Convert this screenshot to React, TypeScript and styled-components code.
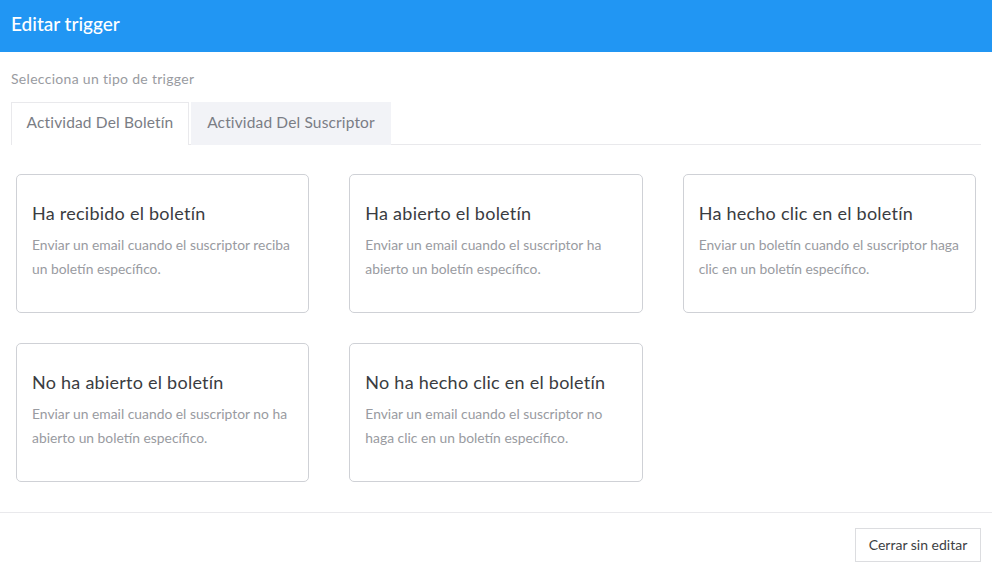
import React from "react";
import styled, { createGlobalStyle } from "styled-components";

const FONT = `Lato, "Noto Sans", "Liberation Sans", sans-serif`;

const triggers = [
  {
    title: "Ha recibido el boletín",
    text: "Enviar un email cuando el suscriptor reciba un boletín específico.",
  },
  {
    title: "Ha abierto el boletín",
    text: "Enviar un email cuando el suscriptor ha abierto un boletín específico.",
  },
  {
    title: "Ha hecho clic en el boletín",
    text: "Enviar un boletín cuando el suscriptor haga clic en un boletín específico.",
  },
  {
    title: "No ha abierto el boletín",
    text: "Enviar un email cuando el suscriptor no ha abierto un boletín específico.",
  },
  {
    title: "No ha hecho clic en el boletín",
    text: "Enviar un email cuando el suscriptor no haga clic en un boletín específico.",
  },
];

const GlobalStyle = createGlobalStyle`
  html, body {
    margin: 0;
    padding: 0;
    background: #fff;
  }
  body {
    font-family: ${FONT};
  }
`;

const Page = styled.div`
  width: 992px;
  height: 575px;
  display: flex;
  flex-direction: column;
  overflow: hidden;
`;

/* ------------------------ HEADER ---------------------- */

const Header = styled.header`
  height: 52px;
  flex-shrink: 0;
  display: flex;
  align-items: center;
  padding: 0 11px 5px;
  box-sizing: border-box;
  background: #2196f3;
`;

const Title = styled.h1`
  margin: 0;
  color: #fff;
  font-size: 19px;
  font-weight: 500;
`;

/* ------------------------ BODY ---------------------- */

const Body = styled.main`
  flex: 1;
  padding: 0 11px;
`;

const Label = styled.div`
  margin-top: 18px;
  height: 17px;
  line-height: 17px;
  color: #999ba1;
  font-size: 14px;
  letter-spacing: 0.3px;
`;

const Tabs = styled.div`
  margin-top: 15px;
  height: 42px;
  display: flex;
  gap: 2px;
  border-bottom: 1px solid #e9e9ec;
`;

const Tab = styled.div<{ $active?: boolean }>`
  height: 43px;
  box-sizing: border-box;
  display: flex;
  align-items: center;
  justify-content: center;
  padding-bottom: 4px;
  width: ${(props) => (props.$active ? "178px" : "200px")};
  color: #7a7d85;
  font-size: 15.5px;
  letter-spacing: 0.15px;
  background: ${(props) => (props.$active ? "#fff" : "#f2f3f7")};
  border: ${(props) => (props.$active ? "1px solid #e9e9ec" : "none")};
  border-bottom: none;
`;

const Grid = styled.div`
  margin: 29px 5px 0;
  display: grid;
  grid-template-columns: repeat(3, 1fr);
  column-gap: 40px;
  row-gap: 30px;
`;

const Card = styled.div`
  height: 139px;
  box-sizing: border-box;
  padding: 28px 15px 0;
  border: 1px solid #cfd1d6;
  border-radius: 5px;
`;

const CardTitle = styled.h3`
  margin: 0;
  height: 20px;
  line-height: 20px;
  color: #3a3c41;
  font-size: 18px;
  font-weight: 400;
  letter-spacing: 0.25px;
`;

const CardText = styled.p`
  margin: 10px 0 0;
  color: #999ba1;
  font-size: 13.85px;
  line-height: 24px;
`;

/* ------------------------ FOOTER ---------------------- */

const Footer = styled.footer`
  height: 63px;
  flex-shrink: 0;
  box-sizing: border-box;
  display: flex;
  justify-content: flex-end;
  padding: 15px 11px 0;
  border-top: 1px solid #e9e9ec;
`;

const CloseButton = styled.button`
  width: 126px;
  height: 34px;
  padding: 0 0 2px;
  background: #fff;
  border: 1px solid #dcdde0;
  color: #3d3f44;
  font-family: ${FONT};
  font-size: 14px;
`;

export default function App() {
  return (
    <Page>
      <GlobalStyle />
      <Header>
        <Title>Editar trigger</Title>
      </Header>
      <Body>
        <Label>Selecciona un tipo de trigger</Label>
        <Tabs>
          <Tab $active>Actividad Del Boletín</Tab>
          <Tab>Actividad Del Suscriptor</Tab>
        </Tabs>
        <Grid>
          {triggers.map((item) => (
            <Card key={item.title}>
              <CardTitle>{item.title}</CardTitle>
              <CardText>{item.text}</CardText>
            </Card>
          ))}
        </Grid>
      </Body>
      <Footer>
        <CloseButton>Cerrar sin editar</CloseButton>
      </Footer>
    </Page>
  );
}
